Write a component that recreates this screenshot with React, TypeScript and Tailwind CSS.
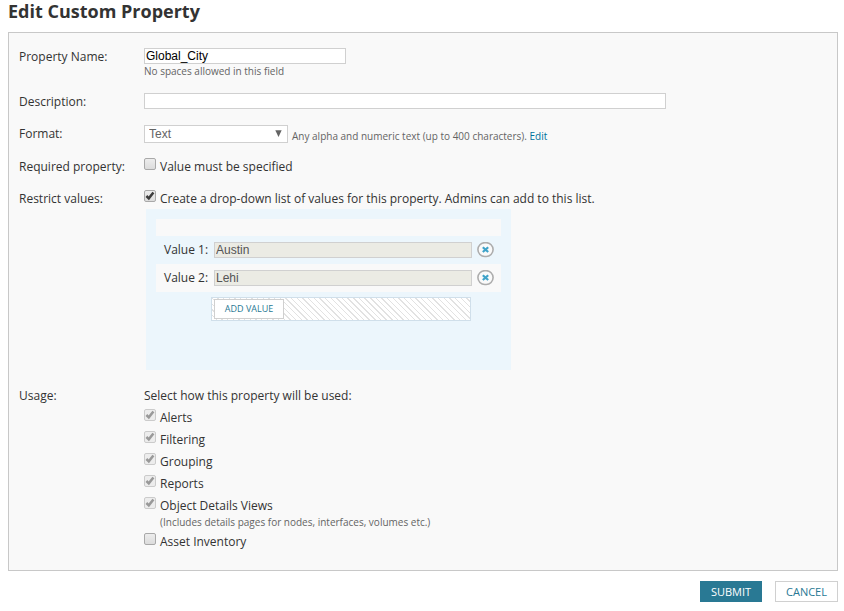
import { useState } from "react";
import type { ReactNode } from "react";
import clsx from "clsx";

const USAGES = [
  { id: "alerts", label: "Alerts", locked: true },
  { id: "filtering", label: "Filtering", locked: true },
  { id: "grouping", label: "Grouping", locked: true },
  { id: "reports", label: "Reports", locked: true },
  {
    id: "details",
    label: "Object Details Views",
    note: "(Includes details pages for nodes, interfaces, volumes etc.)",
    locked: true,
  },
  { id: "asset", label: "Asset Inventory", locked: false },
];

const inputClass =
  "block h-4 w-full border border-[#d0d0d0] bg-white px-px font-['Liberation_Sans',sans-serif] text-[12px] leading-[14px] text-black outline-none";

function Row({
  label,
  htmlFor,
  children,
}: {
  label: string;
  htmlFor?: string;
  children: ReactNode;
}) {
  return (
    <div className="grid grid-cols-[125px_minmax(0,1fr)]">
      {htmlFor ? (
        <label htmlFor={htmlFor}>{label}</label>
      ) : (
        <span>{label}</span>
      )}
      <div>{children}</div>
    </div>
  );
}

function Checkbox({
  id,
  label,
  checked = false,
  disabled = false,
  onChange,
}: {
  id: string;
  label: string;
  checked?: boolean;
  disabled?: boolean;
  onChange?: (checked: boolean) => void;
}) {
  return (
    <div className="flex gap-1">
      <span className="relative size-3 shrink-0">
        <input
          id={id}
          type="checkbox"
          checked={checked}
          disabled={disabled}
          onChange={(e) => onChange?.(e.target.checked)}
          className="block size-3 appearance-none rounded-xs border border-[#a9a9a9] bg-linear-to-b from-[#ededed] to-[#dcdcdc] disabled:border-[#cbcbcb] disabled:to-[#ececec]"
        />
        {checked && (
          <svg
            viewBox="0 0 12 12"
            className={clsx(
              "pointer-events-none absolute inset-0 size-3",
              disabled ? "text-[#999]" : "text-[#3c3c3c]",
            )}
            fill="none"
            stroke="currentColor"
            strokeWidth="2.5"
          >
            <path d="M2.4 6 4.8 8.3 9.4 2.4" />
          </svg>
        )}
      </span>
      <label htmlFor={id}>{label}</label>
    </div>
  );
}

function RemoveIcon() {
  return (
    <svg viewBox="0 0 17 16" className="block h-4 w-[17px]" fill="none">
      <rect x="0.9" y="0.7" width="15.2" height="13.8" rx="6.9" fill="#fafafa" stroke="#adadad" strokeWidth="1.6" />
      <path d="M5.8 5.2 11.2 10M11.2 5.2 5.8 10" stroke="#3fa3c9" strokeWidth="2.2" />
    </svg>
  );
}

export default function App() {
  const [name, setName] = useState("Global_City");
  const [description, setDescription] = useState("");
  const [required, setRequired] = useState(false);
  const [restrict, setRestrict] = useState(true);
  const [asset, setAsset] = useState(false);
  const [values, setValues] = useState(["Austin", "Lehi"]);

  return (
    <main className="pr-1.5 pl-2 font-['Open_Sans',sans-serif] text-[12px] leading-[18px] text-[#333]">
      <h1 className="mb-2.5 text-[18px] leading-[22px] font-bold">
        Edit Custom Property
      </h1>

      <form onSubmit={(e) => e.preventDefault()}>
        <div className="flex flex-col gap-3.5 border border-[#c8c8c8] bg-[#f9f9f9] px-2.5 pt-[15px] pb-[19px]">
          <Row label="Property Name:" htmlFor="name">
            <div className="max-w-[202px]">
              <input
                id="name"
                className={inputClass}
                value={name}
                onChange={(e) => setName(e.target.value)}
              />
            </div>
            <p className="text-[10px] leading-[15px] text-[#646464]">
              No spaces allowed in this field
            </p>
          </Row>

          <Row label="Description:" htmlFor="description">
            <div className="max-w-[522px]">
              <input
                id="description"
                className={inputClass}
                value={description}
                onChange={(e) => setDescription(e.target.value)}
              />
            </div>
          </Row>

          <Row label="Format:" htmlFor="format">
            <div className="flex items-start gap-1">
              <div className="relative w-36 shrink-0">
                <select
                  id="format"
                  className="block h-[18px] w-full appearance-none border border-[#d0d0d0] bg-white px-1 font-['Liberation_Sans',sans-serif] text-[12px] leading-4 text-[#646464]"
                >
                  <option>Text</option>
                </select>
                <svg
                  viewBox="0 0 7 7"
                  className="pointer-events-none absolute top-[5px] right-1.5 size-[7px] fill-[#646464]"
                >
                  <path d="M0.3 0.3h6.4L3.5 7z" />
                </svg>
              </div>
              <p className="pt-[3px] text-[10px] leading-4 text-[#646464]">
                Any alpha and numeric text (up to 400 characters).{" "}
                <a href="#format" className="text-[#00719c]">
                  Edit
                </a>
              </p>
            </div>
          </Row>

          <Row label="Required property:">
            <Checkbox
              id="required"
              label="Value must be specified"
              checked={required}
              onChange={setRequired}
            />
          </Row>

          <Row label="Restrict values:">
            <Checkbox
              id="restrict"
              label="Create a drop-down list of values for this property. Admins can add to this list."
              checked={restrict}
              onChange={setRestrict}
            />
            <div className="mt-px ml-0.5 min-h-[161px] max-w-[365px] bg-[#ecf6fc] p-2.5">
              <div className="h-[17px] bg-[#f9f9f9]" />
              {values.map((value, i) => (
                <div
                  key={i}
                  className="flex h-7 items-center pr-[7px] pl-2 even:bg-transparent odd:bg-[#f9f9f9]"
                >
                  <label htmlFor={`value-${i}`} className="w-[50px] shrink-0">
                    Value {i + 1}:
                  </label>
                  <input
                    id={`value-${i}`}
                    readOnly
                    value={value}
                    className="h-4 min-w-0 flex-1 border border-[#d0d0d0] bg-[#ebebe4] px-px font-['Liberation_Sans',sans-serif] text-[12px] leading-[14px] text-[#545454] outline-none"
                  />
                  <button
                    type="button"
                    aria-label={`Remove value ${i + 1}`}
                    className="ml-[5px] shrink-0"
                    onClick={() => setValues(values.filter((_, n) => n !== i))}
                  >
                    <RemoveIcon />
                  </button>
                </div>
              ))}
              <div className="mt-[5px] mr-[30px] ml-[55px] flex h-6 items-center border border-[#d0dfea] bg-white bg-[repeating-linear-gradient(45deg,#fff_0,#fff_3px,#e2e2e2_3px,#e2e2e2_4px)] px-0.5">
                <button
                  type="button"
                  className="h-5 w-[70px] border border-[#d0d0d0] bg-white text-[9px] leading-[18px] text-[#297994]"
                  onClick={() => setValues([...values, ""])}
                >
                  ADD VALUE
                </button>
              </div>
            </div>
          </Row>

          <fieldset className="grid grid-cols-[125px_minmax(0,1fr)] pt-[3px]">
            <span>Usage:</span>
            <div className="flex flex-col gap-1">
              <p>Select how this property will be used:</p>
              {USAGES.map((usage) => (
                <div key={usage.id}>
                  <Checkbox
                    id={usage.id}
                    label={usage.label}
                    checked={usage.locked || asset}
                    disabled={usage.locked}
                    onChange={setAsset}
                  />
                  {usage.note && (
                    <p className="pl-4 text-[10px] leading-[14px] text-[#646464]">
                      {usage.note}
                    </p>
                  )}
                </div>
              ))}
            </div>
          </fieldset>
        </div>

        <div className="mt-2.5 flex justify-end gap-[13px] text-[11px] leading-[19px]">
          <button
            type="submit"
            className="w-[62px] border border-[#297994] bg-[#297994] text-white"
          >
            SUBMIT
          </button>
          <button
            type="button"
            className="w-[63px] border border-[#d0d0d0] bg-white text-[#297994]"
          >
            CANCEL
          </button>
        </div>
      </form>
    </main>
  );
}
